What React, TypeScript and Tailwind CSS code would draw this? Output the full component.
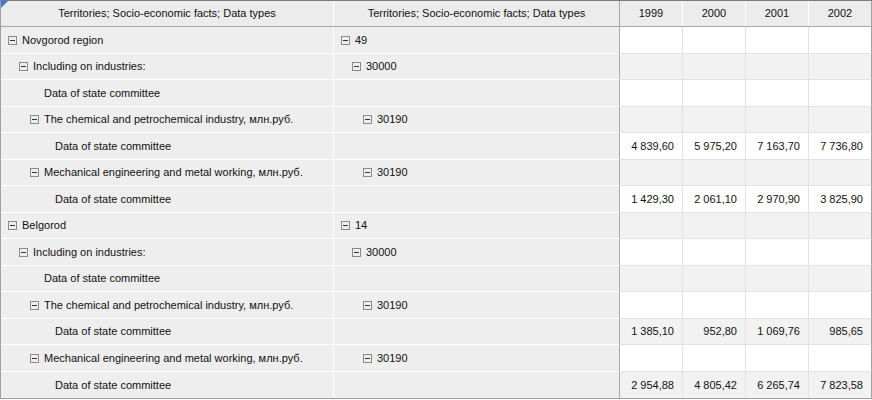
import React from "react";

type Row = {
  level: number;
  label: string;
  box: boolean;
  code?: string;
  values?: string[];
};

const rows: Row[] = [
  { level: 0, label: "Novgorod region", box: true, code: "49" },
  { level: 1, label: "Including on industries:", box: true, code: "30000" },
  { level: 2, label: "Data of state committee", box: false },
  { level: 2, label: "The chemical and petrochemical industry, млн.руб.", box: true, code: "30190" },
  { level: 3, label: "Data of state committee", box: false, values: ["4 839,60", "5 975,20", "7 163,70", "7 736,80"] },
  { level: 2, label: "Mechanical engineering and metal working, млн.руб.", box: true, code: "30190" },
  { level: 3, label: "Data of state committee", box: false, values: ["1 429,30", "2 061,10", "2 970,90", "3 825,90"] },
  { level: 0, label: "Belgorod", box: true, code: "14" },
  { level: 1, label: "Including on industries:", box: true, code: "30000" },
  { level: 2, label: "Data of state committee", box: false },
  { level: 2, label: "The chemical and petrochemical industry, млн.руб.", box: true, code: "30190" },
  { level: 3, label: "Data of state committee", box: false, values: ["1 385,10", "952,80", "1 069,76", "985,65"] },
  { level: 2, label: "Mechanical engineering and metal working, млн.руб.", box: true, code: "30190" },
  { level: 3, label: "Data of state committee", box: false, values: ["2 954,88", "4 805,42", "6 265,74", "7 823,58"] },
];

const years = ["1999", "2000", "2001", "2002"];

// small collapse box drawn in front of expandable members
function MinusBox() {
  return (
    <span className="w-[9px] h-[9px] border border-[#8a8a8a] flex items-center justify-center shrink-0 mr-[5px]">
      <span className="w-[5px] h-px bg-[#333]" />
    </span>
  );
}

function Member({ level, box, text }: { level: number; box: boolean; text?: string }) {
  const pad = box ? 7 + 11 * level : 21 + 11 * level;
  return (
    <div className="flex items-center h-full whitespace-nowrap" style={{ paddingLeft: pad }}>
      {box && <MinusBox />}
      <span>{text}</span>
    </div>
  );
}

export default function App() {
  return (
    <div className="bg-white w-[872px] h-[400px] text-[11px] text-[#111] font-['Liberation_Sans',Arial,sans-serif]">
      <div className="relative w-[872px] border-l border-b border-[#a0a0a0] border-t border-t-[#7a7a7a]">
        {/* corner marker */}
        <svg className="absolute left-0 top-0" width="7" height="7" viewBox="0 0 7 7">
          <polygon points="0,0 7,0 0,7" fill="#3a7bd5" />
        </svg>

        {/* Header */}
        <div className="flex h-[26px] bg-[#ececec] border-b border-[#a8a8a8]">
          <div className="w-[333px] border-r border-white flex items-center justify-center">
            Territories; Socio-economic facts; Data types
          </div>
          <div className="w-[286px] border-r border-[#a8a8a8] flex items-center justify-center">
            Territories; Socio-economic facts; Data types
          </div>
          {years.map((y, i) => (
            <div
              key={y}
              className={
                i < 3
                  ? "w-[63px] border-r border-white flex items-center justify-center"
                  : "w-[63px] border-r border-[#a0a0a0] flex items-center justify-center"
              }
            >
              {y}
            </div>
          ))}
        </div>

        {/* Body */}
        {rows.map((r, idx) => {
          const odd = idx % 2 === 0;
          const last = idx === rows.length - 1;
          const hdrBorder = last ? "" : "border-b border-white";
          const dataBorder = last ? "" : "border-b border-[#e2e2e2]";
          return (
            <div key={idx} className={odd ? "flex h-[27px]" : "flex h-[26px]"}>
              <div className={`w-[333px] bg-[#eeeeee] border-r border-r-white ${hdrBorder}`}>
                <Member level={r.level} box={r.box} text={r.label} />
              </div>
              <div className={`w-[286px] bg-[#eeeeee] border-r border-r-[#a8a8a8] ${hdrBorder}`}>
                {r.code && <Member level={r.level > 2 ? 2 : r.level} box text={r.code} />}
              </div>
              {years.map((y, i) => (
                <div
                  key={y}
                  className={`w-[63px] flex items-center justify-end pr-[8px] border-r ${
                    i < 3 ? "border-r-[#e2e2e2]" : "border-r-[#a0a0a0]"
                  } ${odd ? "bg-white" : "bg-[#f2f2f2]"} ${dataBorder}`}
                >
                  {r.values ? r.values[i] : ""}
                </div>
              ))}
            </div>
          );
        })}
      </div>
    </div>
  );
}
